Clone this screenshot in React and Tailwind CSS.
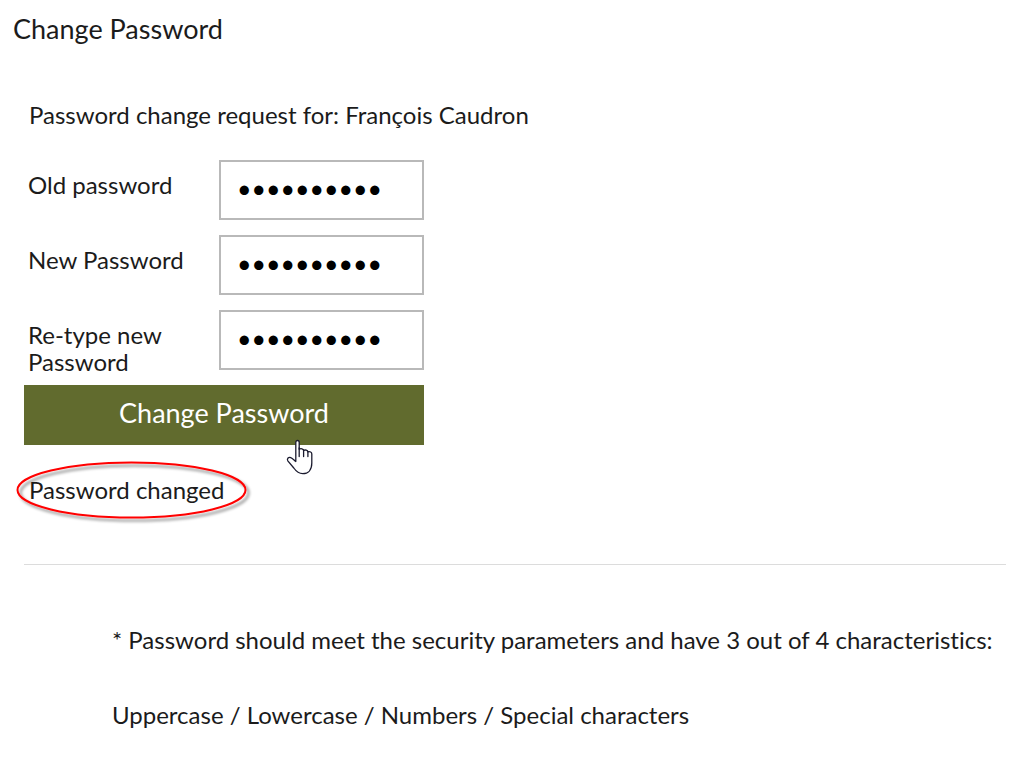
const fields = [
  { id: "old-password", label: "Old password" },
  { id: "new-password", label: "New Password" },
  { id: "retype-password", label: "Re-type new Password" },
];

function PasswordField({ id, label }) {
  return (
    <div className="flex h-[75px] items-start">
      <label htmlFor={id} className="w-[195px] pt-[11px] pr-8 pl-1 leading-[27px]">
        {label}
      </label>
      <input
        id={id}
        type="password"
        defaultValue="abcdefghij"
        className="h-[60px] w-[205px] border-2 border-[#b9b9b9] bg-white px-4 pb-1 text-[25px] text-black outline-none"
      />
    </div>
  );
}

function HandPointer() {
  return (
    <svg
      className="pointer-events-none absolute top-[54px] left-[262px] h-[36px] w-[28px]"
      viewBox="0 0 28 36"
      aria-hidden="true"
    >
      <path
        d="M9.8 22.5V3.6C9.8 0.8 13.2 0.8 13.2 3.6V10.2C14.8 9.2 17.3 9.7 17.6 11.4C19.2 10.6 21.6 11 21.9 12.8C24 12.2 25.8 13.2 25.8 15V24C25.8 31 22 34.7 16.8 34.7C12.2 34.7 10.2 32.4 7.8 29L1.8 21.8C0.6 19.6 2.6 17.6 4.8 18.7C6.8 19.6 8.2 21.4 9.8 22.5Z"
        fill="white"
        stroke="#1a1a2e"
        strokeWidth="1.3"
        strokeLinejoin="round"
      />
      <path
        d="M13.2 9V17.5M17.6 11V17.5M21.9 12.5V17.5"
        fill="none"
        stroke="#1a1a2e"
        strokeWidth="1.3"
        strokeLinecap="round"
      />
    </svg>
  );
}

function RedCircle() {
  return (
    <svg
      className="pointer-events-none absolute -top-4 -left-2 h-[66px] w-[240px]"
      viewBox="0 0 240 66"
      aria-hidden="true"
    >
      <defs>
        <filter id="circle-shadow" x="-10%" y="-10%" width="120%" height="130%">
          <feDropShadow dx="3" dy="3" stdDeviation="1.6" floodColor="#000" floodOpacity="0.45" />
        </filter>
      </defs>
      <ellipse
        cx="115.5"
        cy="30"
        rx="114"
        ry="27.5"
        fill="none"
        stroke="#ff0000"
        strokeWidth="2"
        filter="url(#circle-shadow)"
      />
    </svg>
  );
}

function App() {
  return (
    <main className="min-h-screen bg-white pt-[11px] font-['Lato',sans-serif] text-2xl text-[#1b1b1b] [font-variant-ligatures:none]">
      <h1 className="px-[13px] text-[27px] leading-9">Change Password</h1>
      <form className="mt-[54px] px-6" onSubmit={(event) => event.preventDefault()}>
        <p className="px-[5px] leading-[27px]">Password change request for: François Caudron</p>
        <div className="mt-8">
          {fields.map((field) => (
            <PasswordField key={field.id} {...field} />
          ))}
        </div>
        <div className="relative w-[400px]">
          <button className="h-[60px] w-full bg-[#616b2e] pb-1 text-[27px] text-white">Change Password</button>
          <HandPointer />
        </div>
        <div className="relative mt-[31px] w-fit px-[5px] leading-[27px]">
          <p role="status">Password changed</p>
          <RedCircle />
        </div>
      </form>
      <hr className="mt-[61px] mr-[27px] ml-6 border-[#dcdcdc]" />
      <div className="mt-[61px] pl-28 leading-[27px]">
        <p>* Password should meet the security parameters and have 3 out of 4 characteristics:</p>
        <p className="mt-12">Uppercase / Lowercase / Numbers / Special characters</p>
      </div>
    </main>
  );
}

export default App;
